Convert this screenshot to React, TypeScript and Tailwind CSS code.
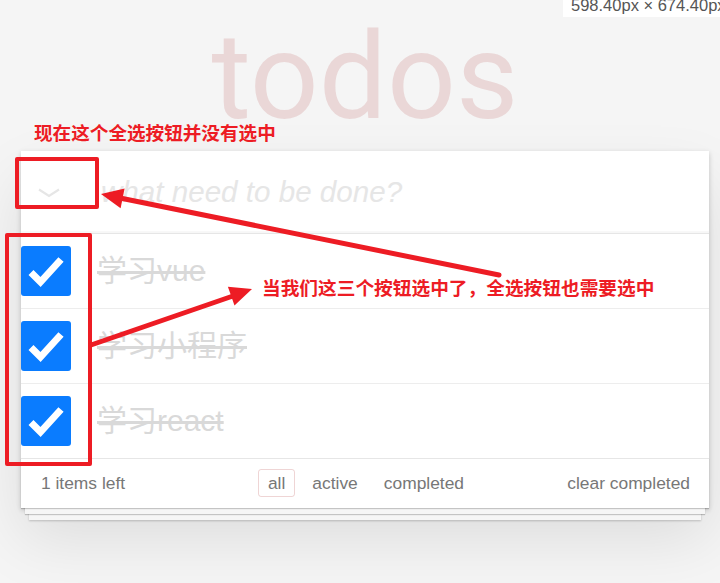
import React from "react";

const todos = ["学习vue", "学习小程序", "学习react"];

function Check() {
  return (
    <span className="flex h-[50px] w-[50px] shrink-0 items-center justify-center rounded-[3px] bg-[#0a7cff]">
      <svg width="50" height="50" viewBox="0 0 50 50">
        <polyline points="10,26.5 19.5,36 40,13.5" fill="none" stroke="#fff" strokeWidth="7" />
      </svg>
    </span>
  );
}

export default function App() {
  return (
    <div className="relative h-[583px] w-[720px] overflow-hidden bg-[#f5f5f5] font-['Liberation_Sans','Noto_Sans_CJK_SC',sans-serif]">
      <div className="ml-[21px] w-[688px] pt-[17px]">
        <h1 className="h-[122px] text-center font-['Roboto',sans-serif] text-[121px] font-normal leading-none text-[rgba(175,47,47,0.15)]">
          todos
        </h1>

        {/* card */}
        <section className="mt-[12px] bg-white shadow-[0_2px_5px_rgba(0,0,0,0.2),0_30px_60px_rgba(0,0,0,0.1)]">
          <header className="flex h-[82px] items-center shadow-[inset_0_-2px_1px_rgba(0,0,0,0.03)]">
            <div className="flex w-[77px] shrink-0 justify-start pl-[17px] pt-[2px]">
              <svg width="22" height="10" viewBox="0 0 22 10">
                <polyline points="1,1.5 11,8 21,1.5" fill="none" stroke="#e6e6e6" strokeWidth="2.2" />
              </svg>
            </div>
            <span className="pl-[3px] text-[29.6px] italic text-[#e6e6e6]">what need to be done?</span>
          </header>

          <ul className="border-t border-[#e6e6e6]">
            {todos.map((t, i) => (
              <li key={t} className={"flex items-center " + (i > 0 ? "h-[75px] border-t border-[#ededed]" : "h-[74px]")}>
                <Check />
                <span className="-mt-[2px] pl-[26px] text-[30px] text-[#d9d9d9] line-through">{t}</span>
              </li>
            ))}
          </ul>

          <footer className="grid h-[50px] grid-cols-[1fr_auto_1fr] items-center border-t border-[#e6e6e6] pl-[20px] pr-[19px] text-[17.4px] text-[#777] shadow-[0_1px_1px_rgba(0,0,0,0.2),0_10px_0_-4px_#f6f6f6,0_11px_1px_-4px_rgba(0,0,0,0.2),0_20px_0_-8px_#f6f6f6,0_21px_2px_-8px_rgba(0,0,0,0.2)]">
            <span>1 items left</span>
            <div className="-mt-[1px] flex items-center">
              <a className="mx-[4px] rounded-[3px] border border-[rgba(175,47,47,0.2)] px-[9px] py-[3px] leading-[20px]">all</a>
              <a className="mx-[4px] rounded-[3px] border border-transparent px-[8px] py-[3px] leading-[20px]">active</a>
              <a className="mx-[4px] rounded-[3px] border border-transparent px-[8px] py-[3px] leading-[20px]">completed</a>
            </div>
            <span className="text-right">clear completed</span>
          </footer>
        </section>
      </div>

      {/* devtools size tooltip */}
      <div className="absolute right-0 top-0 h-[17px] w-[157px] overflow-hidden bg-white pl-[8px]">
        <div className="-mt-[3px] whitespace-nowrap text-[16.5px] leading-[16px] text-[#555]">598.40px × 674.40px</div>
      </div>

      {/* annotations */}
      <p className="absolute left-[34px] top-[123px] text-[18.6px] font-bold leading-[22px] text-[#ed1c24]">现在这个全选按钮并没有选中</p>
      <p className="absolute left-[262px] top-[278px] text-[18.7px] font-bold leading-[22px] text-[#ed1c24]">当我们这三个按钮选中了，全选按钮也需要选中</p>
      <div className="absolute left-[15px] top-[157px] h-[52px] w-[84px] rounded-[2px] border-4 border-[#ed1c24]" />
      <div className="absolute left-[5px] top-[233px] h-[233px] w-[87px] rounded-[2px] border-4 border-[#ed1c24]" />
      <svg className="pointer-events-none absolute inset-0" width="720" height="583">
        <line x1="499" y1="275" x2="120" y2="198" stroke="#ed1c24" strokeWidth="5" strokeLinecap="round" />
        <polygon points="101,194 124.6,188.6 120.6,208.2" fill="#ed1c24" />
        <line x1="91" y1="345" x2="233" y2="296" stroke="#ed1c24" strokeWidth="5" strokeLinecap="round" />
        <polygon points="252,289 234.5,305.6 227.9,286.8" fill="#ed1c24" />
      </svg>
    </div>
  );
}
